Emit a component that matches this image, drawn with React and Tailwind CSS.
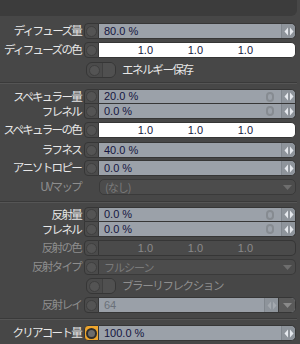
import React from 'react';

const jp = { fontFamily: '"Noto Sans CJK JP", "Noto Sans", sans-serif' };
const num = { fontFamily: '"Liberation Sans", Arial, sans-serif' };

// small left/right arrow used on numeric fields
const Arrows = ({ dim }) => (
  <svg width="10" height="9" viewBox="0 0 10 9">
    <path d="M4 0.5 L0.5 4.5 L4 8.5 Z" fill={dim ? '#a4a9af' : '#e6e9ee'} />
    <path d="M6 0.5 L9.5 4.5 L6 8.5 Z" fill={dim ? '#a4a9af' : '#e6e9ee'} />
  </svg>
);

const Caret = ({ color = '#6e6e6e' }) => (
  <svg width="9" height="5" viewBox="0 0 9 5">
    <path d="M0 0 L9 0 L4.5 5 Z" fill={color} />
  </svg>
);

const Label = ({ children, dim }) => (
  <div
    className={`w-[84px] shrink-0 pr-[3px] text-right text-[11.5px] leading-none tracking-[-1.7px] whitespace-nowrap ${dim ? 'text-[#8e8e8e]' : 'text-[#e8e8e8]'}`}
    style={jp}
  >
    {children}
  </div>
);

const Knob = ({ pos = 'single', active }) => {
  const round = pos === 'top' ? 'rounded-tl-[4px]' : pos === 'bottom' ? 'rounded-bl-[4px]' : 'rounded-l-[4px]';
  return (
    <div
      className={`w-[15px] h-full shrink-0 flex items-center justify-center border border-[#363636] ${pos === 'bottom' ? 'border-t-0' : ''} ${round} ${active ? 'bg-[#eea52d]' : 'bg-[#4b4b4b]'}`}
    >
      <div
        className={`w-[11px] h-[11px] rounded-full ${active ? 'bg-[#6c6c6c] border-2 border-[#2e2e2e]' : 'bg-[#545454] border border-[#3f3f3f]'}`}
      />
    </div>
  );
};

const Ring = () => (
  <div className="w-[8px] h-[10px] rounded-full border-2 border-[#868b91] mr-[7px]" />
);

const NumField = ({ value, pos = 'single', ring, textColor = 'text-[#151540]' }) => {
  const round = pos === 'top' ? 'rounded-tr-[5px]' : pos === 'bottom' ? 'rounded-br-[5px]' : 'rounded-r-[5px]';
  return (
    <div
      className={`flex-1 h-full flex items-center bg-[#9ba1a9] border border-l-0 border-[#363636] ${pos === 'bottom' ? 'border-t-0' : ''} ${round}`}
    >
      <span className={`flex-1 pl-[5px] text-[11px] leading-none ${textColor}`} style={num}>
        {value}
      </span>
      {ring && <Ring />}
      <div className={`w-[14px] h-full flex items-center justify-center bg-[#8e949b] border-l border-[#80868d] ${round}`}>
        <Arrows />
      </div>
    </div>
  );
};

const ColorField = ({ dim }) => (
  <div
    className={`flex-1 h-full flex items-center border border-l-0 border-[#363636] rounded-r-[5px] ${dim ? 'bg-[#4a4a4a] text-[#8a8a8a]' : 'bg-white text-[#151540]'}`}
  >
    <div className="flex pl-[4px] text-[11px] leading-none" style={num}>
      <span className="w-[50px] text-right">1.0</span>
      <span className="w-[50px] text-right">1.0</span>
      <span className="w-[50px] text-right">1.0</span>
    </div>
  </div>
);

const Dropdown = ({ value, withKnob }) => (
  <div
    className={`flex-1 h-full flex items-center bg-[#4c4c4c] border border-[#3a3a3a] ${withKnob ? 'border-l-0 rounded-r-[5px]' : 'rounded-[5px]'}`}
  >
    <span className="flex-1 pl-[5px] text-[11px] leading-none text-[#7a7a7a] tracking-[-1px]" style={jp}>
      {value}
    </span>
    <div className="w-[16px] flex items-center justify-center">
      <Caret />
    </div>
  </div>
);

const Row = ({ label, dim, h = 'h-[16px]', mt, children }) => (
  <div className={`flex items-center ${h} ${mt} pr-[4px]`}>
    <Label dim={dim}>{label}</Label>
    {children}
  </div>
);

const Toggle = ({ label, dim, mt }) => (
  <div className={`flex items-center h-[16px] ${mt}`}>
    <div className="w-[86px] shrink-0" />
    <div className="w-[30px] h-full flex rounded-[6px] border border-[#363636] bg-[#4b4b4b] overflow-hidden">
      <div className="w-[15px] flex items-center justify-center">
        <div className="w-[11px] h-[11px] rounded-full bg-[#545454] border border-[#3f3f3f]" />
      </div>
      <div className="flex-1 border-l border-[#404040] bg-[#505050]" />
    </div>
    <span
      className={`ml-[6px] text-[11.5px] leading-none tracking-[-1.4px] ${dim ? 'text-[#8e8e8e]' : 'text-[#e8e8e8]'}`}
      style={jp}
    >
      {label}
    </span>
  </div>
);

const Separator = ({ mt }) => (
  <div className={`${mt} mr-[3px] h-[2px] border-t border-[#3a3a3a] border-b border-b-[#555555]`} />
);

export default function App() {
  return (
    <div className="w-[300px] h-[344px] bg-[#474747] overflow-hidden">
      <div className="h-[16px] mr-[3px] bg-[#3c3c3c] rounded-br-[6px]" />

      <Row label="ディフューズ量" mt="mt-[7px]">
        <Knob />
        <NumField value="80.0 %" />
      </Row>
      <Row label="ディフューズの色" mt="mt-[3px]">
        <Knob />
        <ColorField />
      </Row>
      <Toggle label="エネルギー保存" mt="mt-[4px]" />

      <Separator mt="mt-[4px]" />

      <Row label="スペキュラー量" h="h-[15px]" mt="mt-[5px]">
        <Knob pos="top" />
        <NumField value="20.0 %" pos="top" ring />
      </Row>
      <Row label="フレネル" h="h-[15px]">
        <Knob pos="bottom" />
        <NumField value="0.0 %" pos="bottom" ring />
      </Row>
      <Row label="スペキュラーの色" mt="mt-[3px]">
        <Knob />
        <ColorField />
      </Row>
      <Row label="ラフネス" mt="mt-[4px]">
        <Knob />
        <NumField value="40.0 %" />
      </Row>
      <Row label="アニソトロピー" mt="mt-[2px]">
        <Knob />
        <NumField value="0.0 %" />
      </Row>
      <Row label="UVマップ" dim mt="mt-[3px]">
        <div className="w-[15px] shrink-0" />
        <Dropdown value="(なし)" />
      </Row>

      <Separator mt="mt-[6px]" />

      <Row label="反射量" h="h-[15px]" mt="mt-[4px]">
        <Knob pos="top" />
        <NumField value="0.0 %" pos="top" ring />
      </Row>
      <Row label="フレネル" h="h-[15px]">
        <Knob pos="bottom" />
        <NumField value="0.0 %" pos="bottom" ring />
      </Row>
      <Row label="反射の色" dim mt="mt-[3px]">
        <Knob />
        <ColorField dim />
      </Row>
      <Row label="反射タイプ" dim mt="mt-[3px]">
        <Knob />
        <Dropdown value="フルシーン" withKnob />
      </Row>
      <Toggle label="ブラーリフレクション" dim mt="mt-[3px]" />
      <Row label="反射レイ" dim mt="mt-[3px]">
        <Knob />
        <div className="flex-1 h-full flex items-center bg-[#9aa0a8] border border-l-0 border-[#363636] rounded-r-[5px] overflow-hidden">
          <span className="flex-1 pl-[5px] text-[11px] leading-none text-[#6a7079]" style={num}>
            64
          </span>
          <div className="w-[14px] h-full flex items-center justify-center bg-[#8e949b] border-l border-[#80868d]">
            <Arrows dim />
          </div>
          <div className="w-[17px] h-full flex items-center justify-center bg-[#5a5a5a] border-l border-[#3a3a3a]">
            <Caret color="#8a8a8a" />
          </div>
        </div>
      </Row>

      <Separator mt="mt-[5px]" />

      <Row label="クリアコート量" mt="mt-[5px]">
        <Knob active />
        <NumField value="100.0 %" />
      </Row>
    </div>
  );
}
